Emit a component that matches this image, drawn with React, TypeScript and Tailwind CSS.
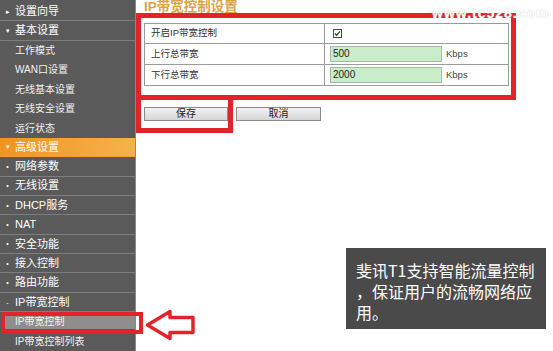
import { FC } from "react"

type NavItem = { label: string; kind: "top" | "sub" | "active" | "selected"; icon?: string }

const nav: NavItem[] = [
  { label: "设置向导", kind: "top", icon: "▸" },
  { label: "基本设置", kind: "top", icon: "▾" },
  { label: "工作模式", kind: "sub" },
  { label: "WAN口设置", kind: "sub" },
  { label: "无线基本设置", kind: "sub" },
  { label: "无线安全设置", kind: "sub" },
  { label: "运行状态", kind: "sub" },
  { label: "高级设置", kind: "active", icon: "▾" },
  { label: "网络参数", kind: "top", icon: "•" },
  { label: "无线设置", kind: "top", icon: "•" },
  { label: "DHCP服务", kind: "top", icon: "•" },
  { label: "NAT", kind: "top", icon: "•" },
  { label: "安全功能", kind: "top", icon: "•" },
  { label: "接入控制", kind: "top", icon: "•" },
  { label: "路由功能", kind: "top", icon: "•" },
  { label: "IP带宽控制", kind: "top", icon: "-" },
  { label: "IP带宽控制", kind: "selected" },
  { label: "IP带宽控制列表", kind: "sub" },
]

const font = "font-['Liberation_Sans','Noto_Sans_CJK_SC',sans-serif]"
const btn =
  "flex items-center justify-center h-[14px] border border-[#8a8a8a] bg-gradient-to-b from-[#f2f2f2] to-[#d6d6d6] text-[10px] leading-none text-[#222]"

const NavRow: FC<{ item: NavItem }> = ({ item }) => {
  if (item.kind === "sub" || item.kind === "selected") {
    return (
      <div className="h-[19.4px] flex items-center pl-[5px]">
        <div className={`flex-1 h-[15px] flex items-center pl-[10px] text-[10px] text-[#f2f2f2] ${item.kind === "selected" ? "bg-[#8e8e8e]" : ""}`}>
          {item.label}
        </div>
      </div>
    )
  }
  return (
    <div
      className={`h-[19.4px] flex items-center border-b border-[#7e7e7e] text-[11px] text-white ${
        item.kind === "active" ? "bg-gradient-to-r from-[#ee9420] to-[#f6b24a] border-[#f0a030]" : ""
      }`}
    >
      <span className="w-[15px] text-center text-[7px] leading-none">{item.icon}</span>
      <span>{item.label}</span>
    </div>
  )
}

export default function App() {
  return (
    <div className={`relative w-[553px] h-[351px] overflow-hidden bg-white flex ${font}`}>
      <aside className="w-[136px] shrink-0 bg-[#5a5a5a] pt-[2px] border-r border-[#8a8a8a]">
        {nav.map((item, i) => (
          <NavRow key={i} item={item} />
        ))}
      </aside>

      <main className="flex-1 flex flex-col items-start">
        <h1 className="h-[13px] pl-[8px] text-[13.5px] leading-[13px] font-bold text-[#d9a244]">IP带宽控制设置</h1>

        <div className="w-[380px] border-[5px] border-[#e2232b] pt-[5px] pb-[9px] pl-[3px] pr-[2px]">
          <table className="w-full border-collapse text-[9.5px] text-[#333]">
            <tbody>
              <tr className="h-[20px]">
                <td className="w-[180px] border border-[#9a9a9a] pl-[6px]">开启IP带宽控制</td>
                <td className="border border-[#9a9a9a] pl-[8px]">
                  <span className="w-[9px] h-[9px] border border-[#4a4a4a] bg-white flex items-center justify-center">
                    <svg viewBox="0 0 8 8" className="w-[7px] h-[7px]">
                      <path d="M1 4 L3 6 L7 1.5" fill="none" stroke="#1f4d1f" strokeWidth="1.4" />
                    </svg>
                  </span>
                </td>
              </tr>
              {[
                ["上行总带宽", "500"],
                ["下行总带宽", "2000"],
              ].map(([label, value]) => (
                <tr key={label} className="h-[21px]">
                  <td className="border border-[#9a9a9a] pl-[6px]">{label}</td>
                  <td className="border border-[#9a9a9a] pl-[5px]">
                    <div className="flex items-center gap-[4px]">
                      <div className="w-[112px] h-[16px] bg-[#c9ecc9] border border-[#a8b8a8] pl-[2px] text-[10px] leading-[14px] text-[#222]">
                        {value}
                      </div>
                      <span className="text-[9.5px] text-[#444]">Kbps</span>
                    </div>
                  </td>
                </tr>
              ))}
            </tbody>
          </table>
        </div>

        <div className="flex items-start -mt-[5px]">
          <div className="flex border-[5px] border-[#e2232b] pl-[3px] pt-[7px] pb-[7px]">
            <button className={`w-[84px] ${btn}`}>保存</button>
          </div>
          <button className={`mt-[12px] ml-[3px] w-[85px] ${btn}`}>取消</button>
        </div>
      </main>

      {/* annotations over the screenshot */}
      <span className="absolute left-[432px] top-[3px] text-[14px] font-bold tracking-[1px] text-white [text-shadow:0_0_1px_#b8b8b8]">
        www.tc528.com
      </span>

      <div className="absolute left-[1px] top-[312px] w-[142px] h-[22px] border-[4px] border-[#e2232b] pointer-events-none" />

      <svg className="absolute left-[144px] top-[308px]" width="52" height="34" viewBox="0 0 52 34">
        <path
          d="M3.5 17 L26 3.5 L26 9.5 L49 9.5 L49 24.5 L26 24.5 L26 30.5 Z"
          fill="white"
          stroke="#e2232b"
          strokeWidth="3.5"
          strokeLinejoin="round"
        />
      </svg>

      <div className="absolute left-[346px] top-[248px] w-[200px] h-[81px] bg-[#4a4a4a] pl-[10px] pt-[12px] text-[16px] leading-[21px] text-white font-['Noto_Sans_CJK_SC',sans-serif]">
        斐讯T1支持智能流量控制
        <br />
        ，保证用户的流畅网络应
        <br />
        用。
      </div>
    </div>
  )
}
